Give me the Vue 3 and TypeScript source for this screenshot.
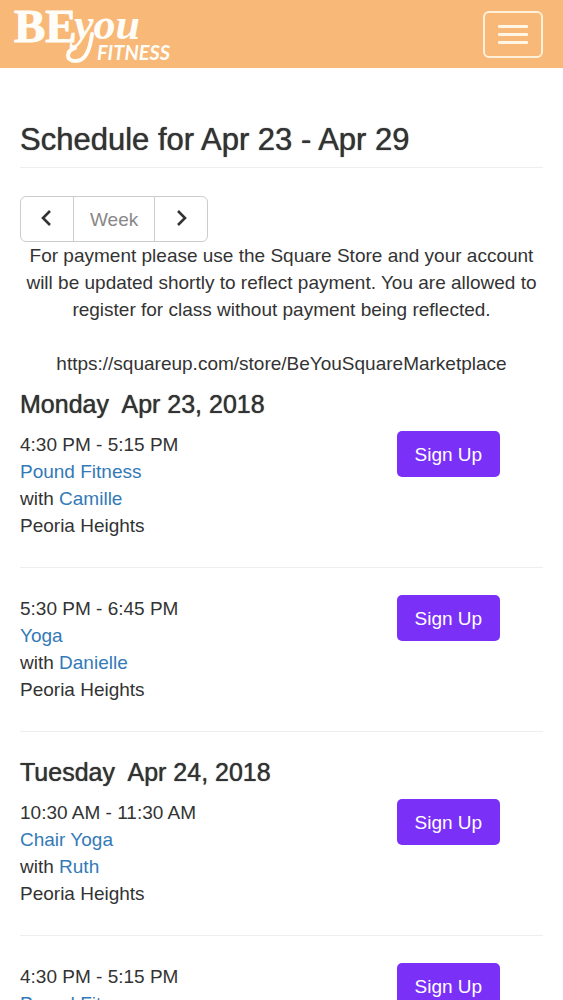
<script setup lang="ts">
interface Session {
  time: string
  name: string
  teacher: string
  place: string
}
interface Day {
  weekday: string
  date: string
  sessions: Session[]
}

const days: Day[] = [
  {
    weekday: 'Monday',
    date: 'Apr 23, 2018',
    sessions: [
      { time: '4:30 PM - 5:15 PM', name: 'Pound Fitness', teacher: 'Camille', place: 'Peoria Heights' },
      { time: '5:30 PM - 6:45 PM', name: 'Yoga', teacher: 'Danielle', place: 'Peoria Heights' },
    ],
  },
  {
    weekday: 'Tuesday',
    date: 'Apr 24, 2018',
    sessions: [
      { time: '10:30 AM - 11:30 AM', name: 'Chair Yoga', teacher: 'Ruth', place: 'Peoria Heights' },
      { time: '4:30 PM - 5:15 PM', name: 'Pound Fitness', teacher: 'Camille', place: 'Peoria Heights' },
    ],
  },
]
</script>

<template>
  <div class="page">
    <header class="navbar">
      <a class="brand" href="#" aria-label="BEyou Fitness">
        <svg width="176" height="68" viewBox="0 0 176 68" fill="#fffdf8">
          <text class="brand-be" x="6" y="42">BE</text>
          <text class="brand-you" x="66" y="39">you</text>
          <path class="swash" d="M84 34C82 50 77 61 68 61C57 61 58 51 67 48" />
          <text class="brand-fitness" x="89" y="60">FITNESS</text>
        </svg>
      </a>
      <button class="toggle" type="button" aria-label="Toggle navigation">
        <span class="bar"></span>
        <span class="bar"></span>
        <span class="bar"></span>
      </button>
    </header>

    <main>
      <h1 class="title">Schedule for Apr 23 - Apr 29</h1>

      <div class="week-nav">
        <button type="button" aria-label="Previous week">
          <svg width="14" height="20" viewBox="0 0 14 20"><path d="M10 2 3 9l7 7" /></svg>
        </button>
        <button type="button" class="current" disabled>Week</button>
        <button type="button" aria-label="Next week">
          <svg width="14" height="20" viewBox="0 0 14 20"><path d="m4 2 7 7-7 7" /></svg>
        </button>
      </div>

      <p class="notice">
        For payment please use the Square Store and your account will be updated shortly to reflect
        payment. You are allowed to register for class without payment being reflected.
      </p>
      <p class="notice store">https://squareup.com/store/BeYouSquareMarketplace</p>

      <section v-for="day in days" :key="day.date" class="day">
        <h2>{{ day.weekday }}&nbsp; {{ day.date }}</h2>
        <article v-for="session in day.sessions" :key="session.time" class="session">
          <div>
            <div>{{ session.time }}</div>
            <div><a href="#">{{ session.name }}</a></div>
            <div>with <a href="#">{{ session.teacher }}</a></div>
            <div>{{ session.place }}</div>
          </div>
          <div>
            <button type="button" class="signup">Sign Up</button>
          </div>
        </article>
      </section>
    </main>
  </div>
</template>

<style>
body {
  margin: 0;
  background: #fff;
}
#app {
  height: 100vh;
  overflow: hidden;
}
</style>

<style scoped>
.page {
  color: #333;
  font-family: "Liberation Sans", Arial, sans-serif;
  font-size: 19px;
  line-height: 27px;
}
.page button {
  font-family: inherit;
  font-size: 19px;
  line-height: 27px;
  cursor: pointer;
}
a {
  color: #337ab7;
  text-decoration: none;
}
.navbar {
  display: flex;
  align-items: center;
  justify-content: space-between;
  height: 68px;
  padding: 0 20px 0 8px;
  background: #f8b878;
}
.brand svg {
  display: block;
}
.brand-be {
  font: bold 47px "Liberation Serif", serif;
  stroke: #fffdf8;
  stroke-width: 1;
}
.brand-you {
  font: italic bold 44px "Liberation Serif", serif;
}
.swash {
  fill: none;
  stroke: #fffdf8;
  stroke-width: 4;
  stroke-linecap: round;
}
.brand-fitness {
  font: italic bold 20px Lato, sans-serif;
}
.toggle {
  display: flex;
  flex-direction: column;
  align-items: center;
  justify-content: center;
  gap: 5px;
  width: 60px;
  height: 47px;
  padding: 0;
  border: 2px solid #fff0da;
  border-radius: 6px;
  background: transparent;
}
.bar {
  width: 30px;
  height: 3px;
  border-radius: 1px;
  background: #fff6e6;
}
main {
  padding: 55px 20px 0;
}
.title {
  margin: 0 0 28px;
  padding-bottom: 10px;
  border-bottom: 1px solid #eee;
  font-size: 31px;
  font-weight: 500;
  line-height: 34px;
  text-shadow: 0 0 1px #333;
}
.week-nav {
  display: flex;
}
.week-nav button {
  display: flex;
  align-items: center;
  justify-content: center;
  min-width: 54px;
  height: 46px;
  padding: 0 16px;
  border: 1px solid #ccc;
  background: #fff;
  color: #333;
}
.week-nav button + button {
  margin-left: -1px;
}
.week-nav button:first-child {
  border-radius: 6px 0 0 6px;
}
.week-nav button:last-child {
  border-radius: 0 6px 6px 0;
}
.week-nav .current {
  color: #888;
}
.week-nav path {
  fill: none;
  stroke: #333;
  stroke-width: 2.6;
}
.notice {
  margin: 0 0 27px;
  text-align: center;
}
.store {
  margin: 0;
}
h2 {
  margin: 14px 0 13px;
  font-size: 25px;
  font-weight: 500;
  line-height: 27px;
  text-shadow: 0 0 1px #333;
}
.day + .day h2 {
  margin-top: 0;
}
.session {
  display: grid;
  grid-template-columns: 18fr 7fr;
  margin-bottom: 27px;
  padding-bottom: 28px;
  border-bottom: 1px solid #eee;
}
.signup {
  height: 46px;
  padding: 0 18px;
  border: 0;
  border-radius: 5px;
  background: #7b30f8;
  color: #fff;
}
</style>
